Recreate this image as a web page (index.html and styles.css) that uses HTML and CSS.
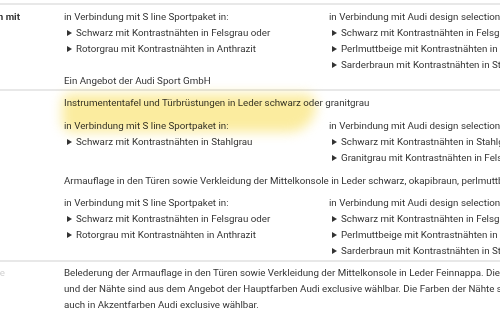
FILE: index.html
```html
<!DOCTYPE html>
<html lang="de">
<head>
<meta charset="utf-8">
<title>Ausstattung</title>
<link rel="stylesheet" href="styles.css">
</head>
<body>
<div class="table">
  <div class="row row-1">
    <div class="label"><span class="label-text">Sportsitze vorn mit</span></div>
    <div class="content">
      <div class="split">
        <div class="group">
          <p class="line">in Verbindung mit S line Sportpaket in:</p>
          <ul class="list">
            <li>Schwarz mit Kontrastnähten in Felsgrau oder</li>
            <li>Rotorgrau mit Kontrastnähten in Anthrazit</li>
          </ul>
        </div>
        <div class="group">
          <p class="line">in Verbindung mit Audi design selection in:</p>
          <ul class="list">
            <li>Schwarz mit Kontrastnähten in Felsgrau oder</li>
            <li>Perlmuttbeige mit Kontrastnähten in Achatgrau</li>
            <li>Sarderbraun mit Kontrastnähten in Stahlgrau</li>
          </ul>
        </div>
      </div>
      <p class="line">Ein Angebot der Audi Sport GmbH</p>
    </div>
  </div>

  <div class="row row-2">
    <div class="label"></div>
    <div class="content">
      <p class="line">Instrumententafel und Türbrüstungen in Leder schwarz oder granitgrau</p>
      <div class="split gap-7">
        <div class="group">
          <p class="line">in Verbindung mit S line Sportpaket in:</p>
          <ul class="list">
            <li>Schwarz mit Kontrastnähten in Stahlgrau</li>
          </ul>
        </div>
        <div class="group">
          <p class="line">in Verbindung mit Audi design selection in:</p>
          <ul class="list">
            <li>Schwarz mit Kontrastnähten in Stahlgrau</li>
            <li>Granitgrau mit Kontrastnähten in Felsgrau</li>
          </ul>
        </div>
      </div>
      <p class="line gap-7">Armauflage in den Türen sowie Verkleidung der Mittelkonsole in Leder schwarz, okapibraun, perlmuttbeige</p>
      <div class="split gap-6">
        <div class="group">
          <p class="line">in Verbindung mit S line Sportpaket in:</p>
          <ul class="list">
            <li>Schwarz mit Kontrastnähten in Felsgrau oder</li>
            <li>Rotorgrau mit Kontrastnähten in Anthrazit</li>
          </ul>
        </div>
        <div class="group">
          <p class="line">in Verbindung mit Audi design selection in:</p>
          <ul class="list">
            <li>Schwarz mit Kontrastnähten in Felsgrau oder</li>
            <li>Perlmuttbeige mit Kontrastnähten in Achatgrau</li>
            <li>Sarderbraun mit Kontrastnähten in Stahlgrau</li>
          </ul>
        </div>
      </div>
    </div>
    <div class="highlight"></div>
  </div>

  <div class="row row-3">
    <div class="label"><span class="label-text label-light">Audi exclusive</span></div>
    <div class="content">
      <p class="para">Belederung der Armauflage in den Türen sowie Verkleidung der Mittelkonsole in Leder Feinnappa. Die Farben der Belederung<br>und der Nähte sind aus dem Angebot der Hauptfarben Audi exclusive wählbar. Die Farben der Nähte sind zusätzlich<br>auch in Akzentfarben Audi exclusive wählbar.</p>
    </div>
  </div>
</div>
</body>
</html>
```

FILE: styles.css
```css
* { box-sizing: border-box; }
html, body { margin: 0; padding: 0; }
body {
  background: #ffffff;
  color: #333333;
  font-family: Roboto, "Liberation Sans", sans-serif;
  font-size: 9.75px;
  line-height: 16px;
  width: 500px;
  height: 317px;
  overflow: hidden;
}
.table {
  padding-top: 3px;
  margin-left: -200px;
  width: 900px;
}
.row {
  position: relative;
  display: grid;
  grid-template-columns: 264px 1fr;
  border-top: 2px solid #e8e8e8;
}
.row-1 { padding: 4px 0 0; }
.row-2 { padding: 4px 0 1px; }
.row-3 { padding: 3px 0 0; }
.label {
  display: flex;
  justify-content: flex-end;
  padding-right: 44px;
}
.label-text {
  white-space: nowrap;
  font-weight: 700;
  color: #333;
}
.label-light {
  font-weight: 400;
  color: #d0d0d0;
  margin-right: 15px;
}
.content { min-width: 0; }
.line, .para { margin: 0; white-space: nowrap; }
.split {
  display: grid;
  grid-template-columns: 265px 265px;
}
.gap-7 { margin-top: 7px; }
.gap-6 { margin-top: 6px; }
.list {
  list-style: none;
  margin: 0;
  padding: 0;
}
.list li {
  position: relative;
  padding-left: 12px;
  white-space: nowrap;
}
.list li::before {
  content: "";
  position: absolute;
  left: 3px;
  top: 5px;
  border-left: 5px solid #333;
  border-top: 3px solid transparent;
  border-bottom: 3px solid transparent;
}
.highlight {
  position: absolute;
  left: 262px;
  top: 3px;
  width: 254px;
  height: 38px;
  background: rgba(247, 220, 80, 0.55);
  border-radius: 12px 18px 44px 16px;
  filter: blur(6px);
  mix-blend-mode: multiply;
  pointer-events: none;
}
```
